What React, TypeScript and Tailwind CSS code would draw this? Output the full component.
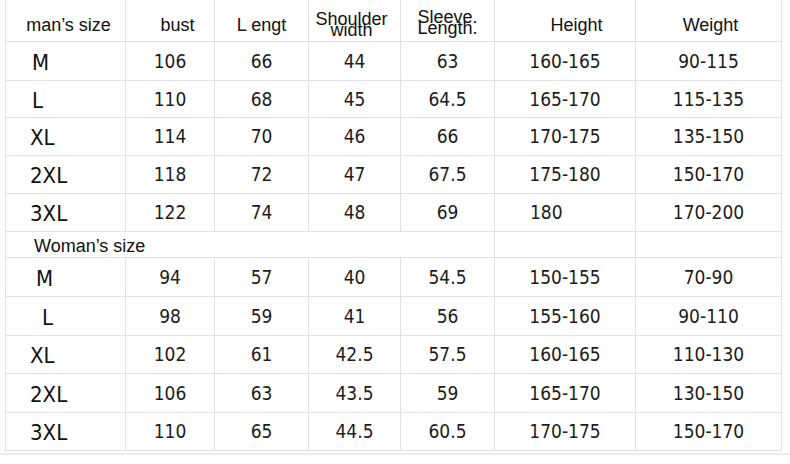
import React from "react";

type Row = {
  size: string;
  pad: string;
  bust: string;
  length: string;
  shoulder: string;
  sleeve: string;
  height: string;
  weight: string;
  h: string;
};

const men: Row[] = [
  { size: "M", pad: "pl-[26px]", bust: "106", length: "66", shoulder: "44", sleeve: "63", height: "160-165", weight: "90-115", h: "h-[39px]" },
  { size: "L", pad: "pl-[26px]", bust: "110", length: "68", shoulder: "45", sleeve: "64.5", height: "165-170", weight: "115-135", h: "h-[37px]" },
  { size: "XL", pad: "pl-[24px]", bust: "114", length: "70", shoulder: "46", sleeve: "66", height: "170-175", weight: "135-150", h: "h-[38px]" },
  { size: "2XL", pad: "pl-[24px]", bust: "118", length: "72", shoulder: "47", sleeve: "67.5", height: "175-180", weight: "150-170", h: "h-[38px]" },
  { size: "3XL", pad: "pl-[24px]", bust: "122", length: "74", shoulder: "48", sleeve: "69", height: "180", weight: "170-200", h: "h-[38px]" },
];

const women: Row[] = [
  { size: "M", pad: "pl-[30px]", bust: "94", length: "57", shoulder: "40", sleeve: "54.5", height: "150-155", weight: "70-90", h: "h-[39px]" },
  { size: "L", pad: "pl-[36px]", bust: "98", length: "59", shoulder: "41", sleeve: "56", height: "155-160", weight: "90-110", h: "h-[39px]" },
  { size: "XL", pad: "pl-[24px]", bust: "102", length: "61", shoulder: "42.5", sleeve: "57.5", height: "160-165", weight: "110-130", h: "h-[38px]" },
  { size: "2XL", pad: "pl-[24px]", bust: "106", length: "63", shoulder: "43.5", sleeve: "59", height: "165-170", weight: "130-150", h: "h-[39px]" },
  { size: "3XL", pad: "pl-[24px]", bust: "110", length: "65", shoulder: "44.5", sleeve: "60.5", height: "170-175", weight: "150-170", h: "h-[38px]" },
];

const line = "border-[#e0e0ef]";
const num = "flex items-center justify-center border-r " + line;
const numFont = { fontFamily: '"DejaVu Sans Condensed", Tahoma, "DejaVu Sans", sans-serif' };

function DataRow({ r }: { r: Row }) {
  return (
    <div className={`flex border-b ${line} ${r.h} text-[19px] text-[#1c1c1c]`} style={numFont}>
      <div className={`w-[120px] flex items-center border-r ${line} ${r.pad} pt-[2px] text-[22px] text-[#111]`}>{r.size}</div>
      <div className={`w-[89px] ${num}`}>{r.bust}</div>
      <div className={`w-[94px] ${num}`}>{r.length}</div>
      <div className={`w-[92px] ${num}`}>{r.shoulder}</div>
      <div className={`w-[94px] ${num}`}>{r.sleeve}</div>
      {r.height === "180" ? (
        <div className={`w-[141px] flex items-center border-r ${line} pl-[35px]`}>{r.height}</div>
      ) : (
        <div className={`w-[141px] ${num}`}>{r.height}</div>
      )}
      <div className={`w-[146px] ${num}`}>{r.weight}</div>
    </div>
  );
}

const App: React.FC = () => {
  return (
    <div className="w-[790px] h-[464px] bg-white overflow-hidden" style={{ fontFamily: '"Liberation Sans", Arial, sans-serif' }}>
      <div className={`ml-[5px] w-[777px] border-l ${line}`}>
        {/* Header */}
        <div className={`flex h-[42px] border-b ${line} text-[18px] text-[#111]`}>
          <div className={`w-[120px] flex items-center justify-center pt-[9px] pl-[6px] border-r ${line}`}>man’s size</div>
          <div className={`w-[89px] flex items-center justify-center pt-[9px] pl-[15px] border-r ${line}`}>bust</div>
          <div className={`w-[94px] flex items-center justify-center pt-[9px] border-r ${line}`}>L engt</div>
          <div className={`w-[92px] flex flex-col items-center justify-center pt-[9px] pr-[6px] leading-[11px] border-r ${line}`}>
            <span>Shoulder</span>
            <span>width</span>
          </div>
          <div className={`w-[94px] flex flex-col items-center justify-center pt-[4px] leading-[11px] border-r ${line}`}>
            <span>Sleeve.</span>
            <span>Length.</span>
          </div>
          <div className={`w-[141px] flex items-center justify-center pt-[9px] pl-[23px] border-r ${line}`}>Height</div>
          <div className={`w-[146px] flex items-center justify-center pt-[9px] pl-[4px] border-r ${line}`}>Weight</div>
        </div>

        {men.map((r) => (
          <DataRow key={"m" + r.size} r={r} />
        ))}

        {/* Woman's size */}
        <div className={`flex h-[26px] border-b ${line} text-[18px] text-[#111]`}>
          <div className={`w-[489px] flex items-center pl-[28px] pt-[3px] border-r ${line}`}>Woman’s size</div>
          <div className={`w-[141px] border-r ${line}`}></div>
          <div className={`w-[146px] border-r ${line}`}></div>
        </div>

        {women.map((r) => (
          <DataRow key={"w" + r.size} r={r} />
        ))}
      </div>
      <div className="mt-[2px] h-[2px] w-full bg-[#ececec]"></div>
    </div>
  );
};

export default App;
